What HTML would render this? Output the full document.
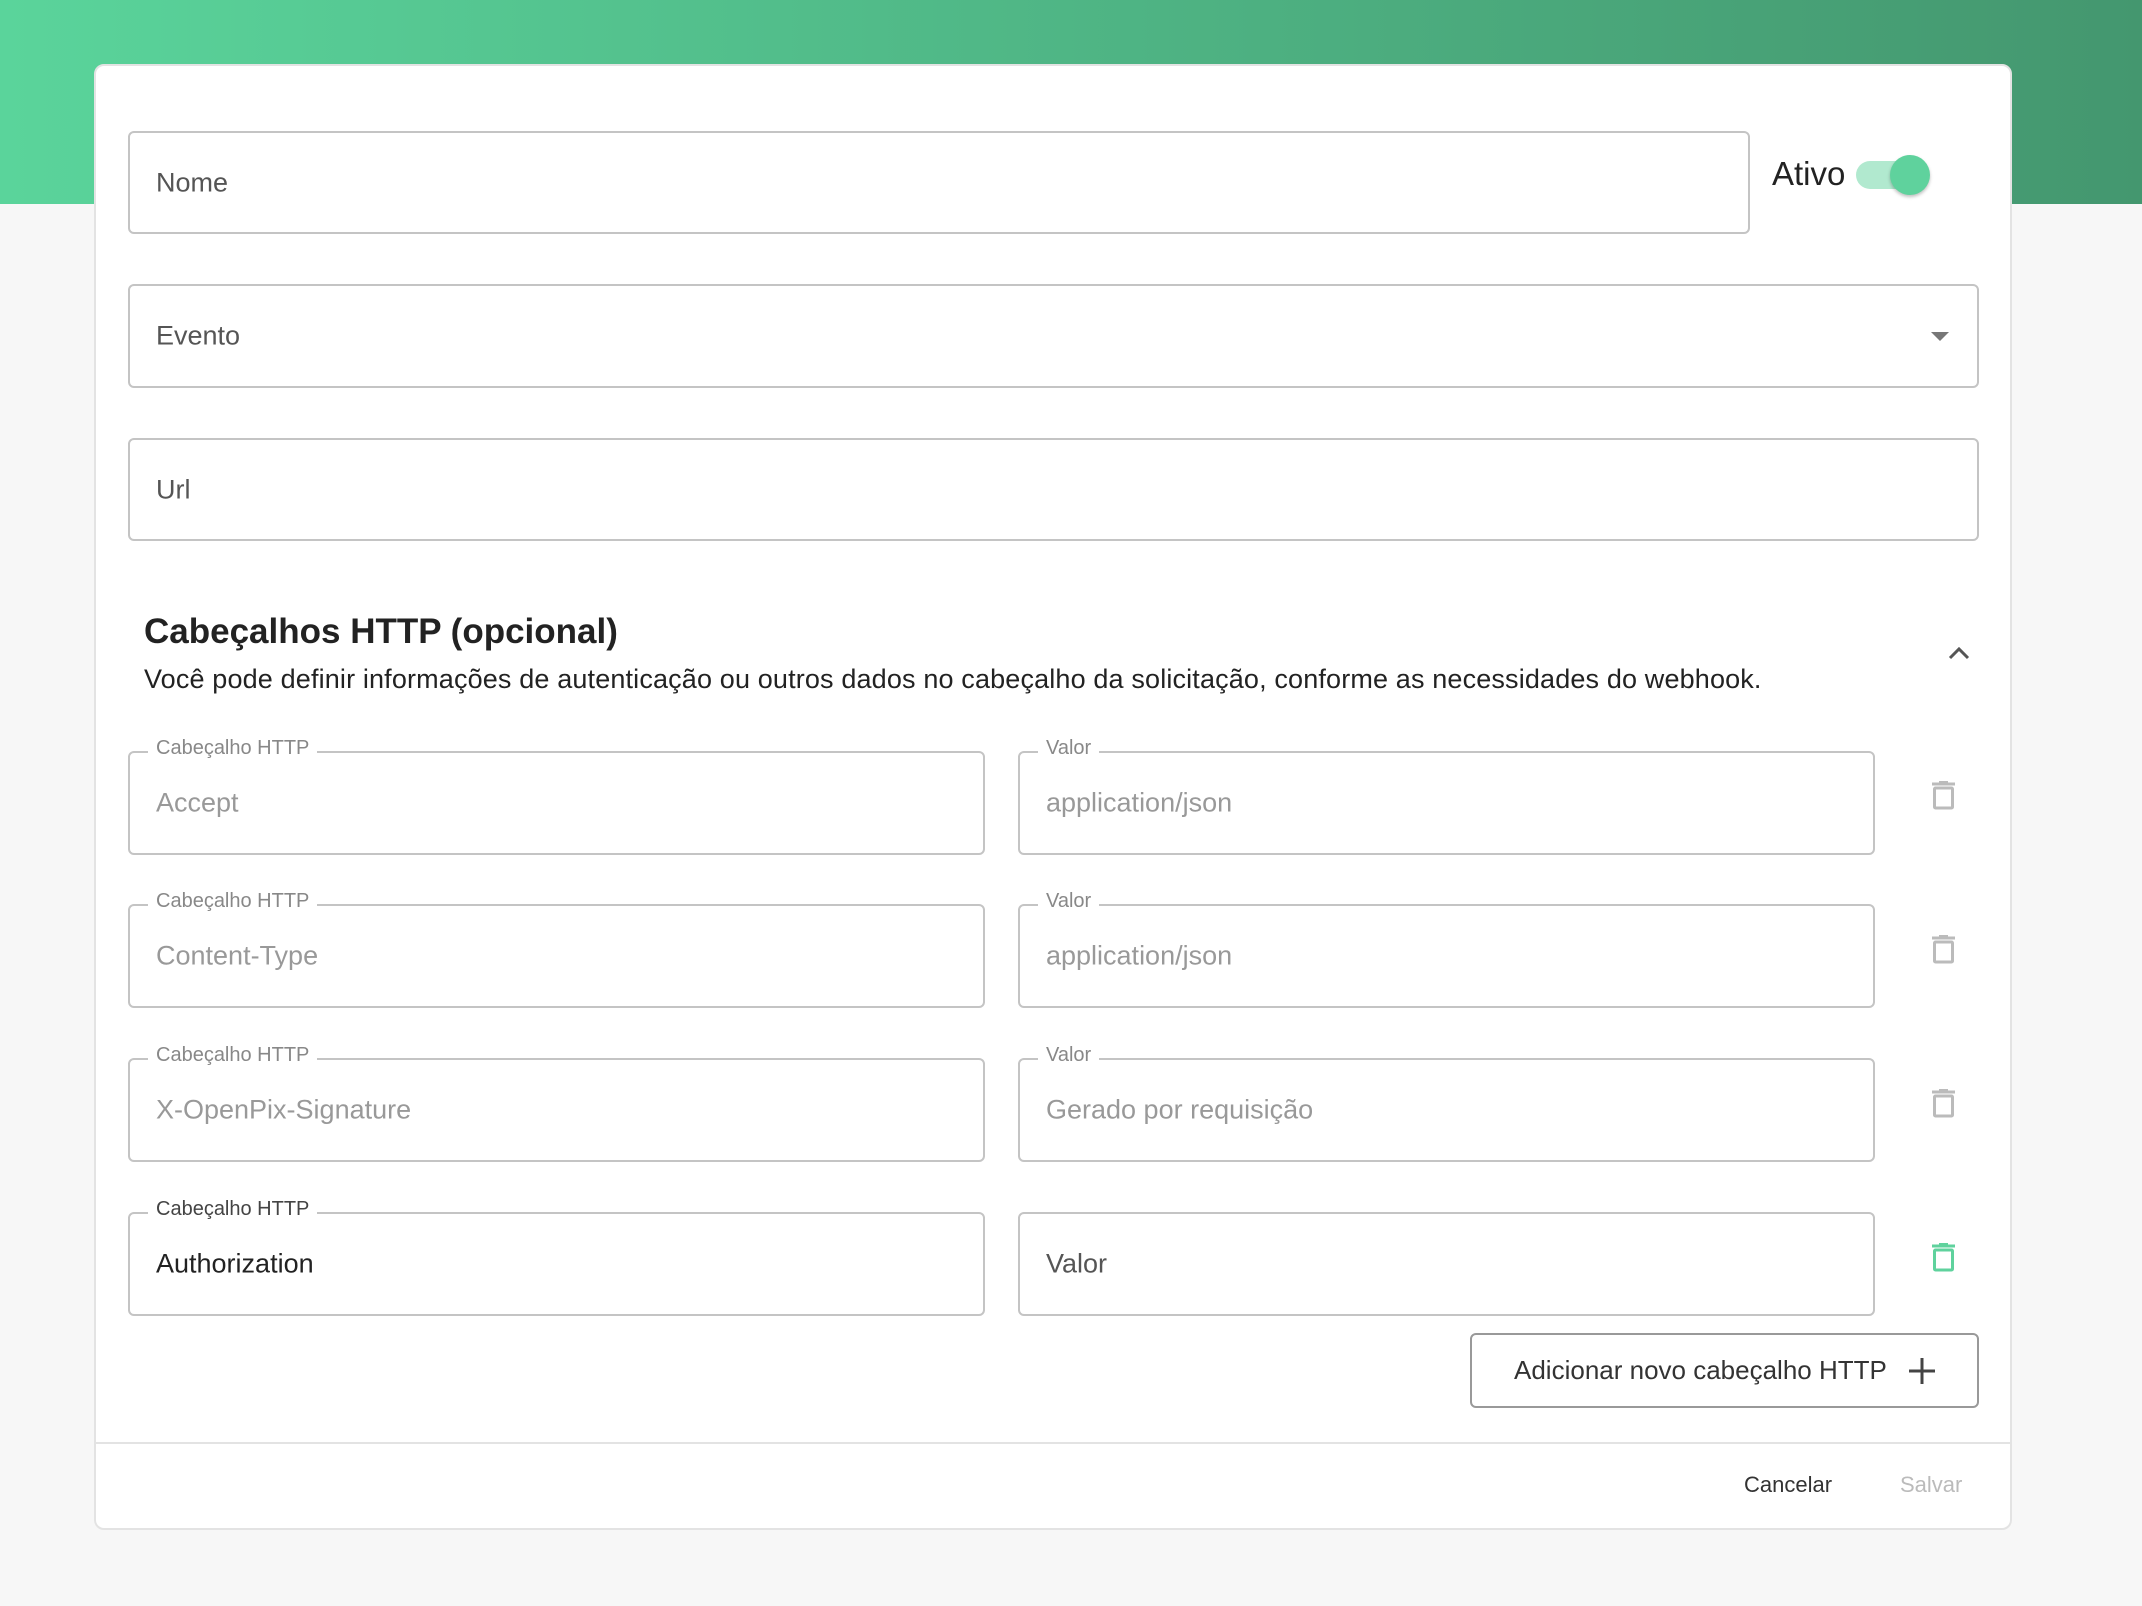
<!DOCTYPE html>
<html><head><meta charset="utf-8"><style>
*{box-sizing:border-box;margin:0;padding:0}
body{width:2142px;height:1606px;background:#f7f7f7;font-family:"Liberation Sans",sans-serif;position:relative;overflow:hidden}
.hdr{position:absolute;left:0;top:0;width:2142px;height:204px;background:linear-gradient(90deg,#5ad49b,#44976f)}
.card{position:absolute;left:94px;top:64px;width:1918px;height:1466px;background:#fff;border:2px solid #e3e3e3;border-radius:10px}
.box{position:absolute;border:2px solid #c4c4c4;border-radius:6px;background:#fff}
.ph{position:absolute;left:26px;top:50%;transform:translateY(-50%);font-size:27px;color:#555}
.lbl{position:absolute;top:-17px;left:18px;padding:0 8px;background:#fff;font-size:20px;color:#888;line-height:24px}
.abs{position:absolute}
.trash{position:absolute;left:1931px}
</style></head><body>
<div class="hdr"></div>
<div class="card"></div>
<div class="box" style="left:128px;top:131px;width:1622px;height:103px"><span class="ph">Nome</span></div>
<div class="abs" style="left:1772px;top:155px;font-size:33px;color:#222">Ativo</div>
<div class="abs" style="left:1856px;top:161px;width:70px;height:28px;border-radius:14px;background:#b1e9cf"></div>
<div class="abs" style="left:1890px;top:155px;width:40px;height:40px;border-radius:50%;background:#5fd29d;box-shadow:0 2px 3px rgba(0,0,0,.25)"></div>
<div class="box" style="left:128px;top:284px;width:1851px;height:104px"><span class="ph">Evento</span>
<div class="abs" style="right:28px;top:46px;width:0;height:0;border-left:9px solid transparent;border-right:9px solid transparent;border-top:9px solid #777"></div></div>
<div class="box" style="left:128px;top:438px;width:1851px;height:103px"><span class="ph">Url</span></div>
<div class="abs" style="left:144px;top:612px;font-size:35px;font-weight:bold;color:#222">Cabeçalhos HTTP (opcional)</div>
<div class="abs" style="left:144px;top:664px;font-size:27px;letter-spacing:0.15px;color:#222">Você pode definir informações de autenticação ou outros dados no cabeçalho da solicitação, conforme as necessidades do webhook.</div>
<svg class="abs" style="left:1947px;top:645px" width="24" height="16" viewBox="0 0 24 16"><path d="M3 13 L12 4 L21 13" fill="none" stroke="#555" stroke-width="3"/></svg>

<div class="box" style="left:128px;top:751px;width:857px;height:104px"><span class="lbl">Cabeçalho HTTP</span><span class="ph" style="color:#999">Accept</span></div>
<div class="box" style="left:1018px;top:751px;width:857px;height:104px"><span class="lbl">Valor</span><span class="ph" style="color:#999">application/json</span></div>
<div class="box" style="left:128px;top:904px;width:857px;height:104px"><span class="lbl">Cabeçalho HTTP</span><span class="ph" style="color:#999">Content-Type</span></div>
<div class="box" style="left:1018px;top:904px;width:857px;height:104px"><span class="lbl">Valor</span><span class="ph" style="color:#999">application/json</span></div>
<div class="box" style="left:128px;top:1058px;width:857px;height:104px"><span class="lbl">Cabeçalho HTTP</span><span class="ph" style="color:#999">X-OpenPix-Signature</span></div>
<div class="box" style="left:1018px;top:1058px;width:857px;height:104px"><span class="lbl">Valor</span><span class="ph" style="color:#999">Gerado por requisição</span></div>
<div class="box" style="left:128px;top:1212px;width:857px;height:104px"><span class="lbl" style="color:#444">Cabeçalho HTTP</span><span class="ph" style="color:#222">Authorization</span></div>
<div class="box" style="left:1018px;top:1212px;width:857px;height:104px"><span class="ph">Valor</span></div>

<svg class="trash" style="top:781px" width="25" height="29" viewBox="0 0 25 29"><path d="M1 3H24M8 1.5H17" stroke="#bbb" stroke-width="3"/><rect x="3.5" y="7" width="18" height="20" fill="none" stroke="#bbb" stroke-width="3" rx="1"/></svg>
<svg class="trash" style="top:935px" width="25" height="29" viewBox="0 0 25 29"><path d="M1 3H24M8 1.5H17" stroke="#bbb" stroke-width="3"/><rect x="3.5" y="7" width="18" height="20" fill="none" stroke="#bbb" stroke-width="3" rx="1"/></svg>
<svg class="trash" style="top:1089px" width="25" height="29" viewBox="0 0 25 29"><path d="M1 3H24M8 1.5H17" stroke="#bbb" stroke-width="3"/><rect x="3.5" y="7" width="18" height="20" fill="none" stroke="#bbb" stroke-width="3" rx="1"/></svg>
<svg class="trash" style="top:1243px" width="25" height="29" viewBox="0 0 25 29"><path d="M1 3H24M8 1.5H17" stroke="#5fd29d" stroke-width="3"/><rect x="3.5" y="7" width="18" height="20" fill="none" stroke="#5fd29d" stroke-width="3" rx="1"/></svg>

<div class="abs" style="left:1470px;top:1333px;width:509px;height:75px;border:2px solid #999;border-radius:6px;font-size:26px;color:#333;line-height:71px;padding-left:42px">Adicionar novo cabeçalho HTTP</div>
<svg class="abs" style="left:1907px;top:1356px" width="30" height="30" viewBox="0 0 30 30"><path d="M15 2V28M2 15H28" stroke="#444" stroke-width="3"/></svg>
<div class="abs" style="left:96px;top:1442px;width:1914px;height:2px;background:#e3e3e3"></div>
<div class="abs" style="left:1744px;top:1472px;font-size:22px;color:#333">Cancelar</div>
<div class="abs" style="left:1900px;top:1472px;font-size:22px;color:#bbb">Salvar</div>
</body></html>
